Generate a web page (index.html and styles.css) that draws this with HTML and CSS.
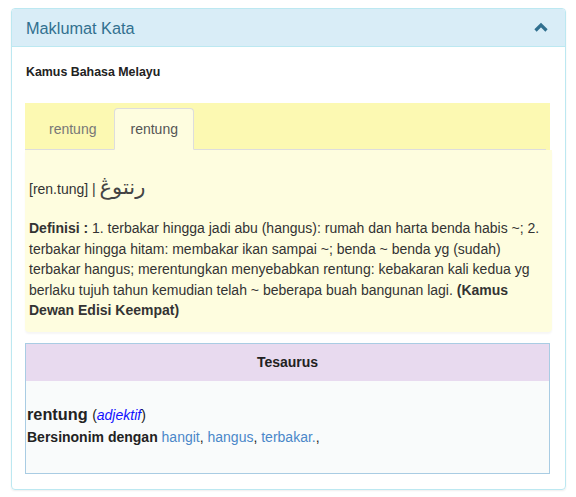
FILE: index.html
```html
<!DOCTYPE html>
<html lang="ms">
<head>
    <meta charset="UTF-8">
    <meta name="viewport" content="width=device-width, initial-scale=1.0">
    <title>Maklumat Kata</title>
    <link rel="stylesheet" href="styles.css">
</head>
<body>
    <div class="page">
        <div class="panel">
            <div class="panel-heading">
                <h3 class="panel-title">Maklumat Kata</h3>
                <svg class="chevron" width="14" height="10" viewBox="0 0 14 10">
                    <path d="M1.5 8.5 L7 3 L12.5 8.5" fill="none" stroke="#31708f" stroke-width="3.2"/>
                </svg>
            </div>

            <div class="panel-body">
                <p class="source">Kamus Bahasa Melayu</p>

                <div class="entry">
                    <ul class="nav-tabs">
                        <li><a href="#">rentung</a></li>
                        <li class="active"><a href="#">rentung</a></li>
                    </ul>
                    <div class="tab-content">
                        <p class="pron">[ren.tung] | <span class="jawi" dir="rtl">رنتوڠ</span></p>
                        <p class="definition">
                            <b>Definisi :</b> 1. terbakar hingga jadi abu (hangus): rumah dan harta benda habis ~; 2. terbakar hingga hitam: membakar ikan sampai ~; benda ~ benda yg (sudah) terbakar hangus; merentungkan menyebabkan rentung: kebakaran kali kedua yg berlaku tujuh tahun kemudian telah ~ beberapa buah bangunan lagi. <b>(Kamus Dewan Edisi Keempat)</b>
                        </p>
                    </div>
                </div>

                <div class="thesaurus">
                    <div class="thesaurus-head">Tesaurus</div>
                    <div class="thesaurus-body">
                        <p class="word"><b>rentung</b> <span class="pos">(<i>adjektif</i>)</span></p>
                        <p class="synonyms"><b>Bersinonim dengan</b> <a href="#">hangit</a>, <a href="#">hangus</a>, <a href="#">terbakar.</a>,</p>
                    </div>
                </div>
            </div>
        </div>
    </div>
</body>
</html>
```

FILE: styles.css
```css
* {
    box-sizing: border-box;
}

body {
    margin: 0;
    font-family: "Liberation Sans", Arial, Helvetica, sans-serif;
    font-size: 14px;
    line-height: 20px;
    color: #333;
    background: #fff;
}

p {
    margin: 0;
}

a {
    text-decoration: none;
}

.page {
    padding: 8px 10px 8px 11px;
}

.panel {
    border: 1px solid #bce8f1;
    border-radius: 4px;
    box-shadow: 0 1px 2px rgba(0,0,0,0.07);
}

.panel-heading {
    display: flex;
    align-items: center;
    justify-content: space-between;
    background-color: #d9edf7;
    border-bottom: 1px solid #bce8f1;
    border-radius: 3px 3px 0 0;
    padding: 9px 17px 8px 14px;
}

.panel-title {
    margin: 0;
    font-size: 16.3px;
    font-weight: normal;
    line-height: 20px;
    color: #31708f;
}

.chevron {
    display: block;
    margin-top: -2px;
}

.panel-body {
    padding: 15px 15px 15px 13px;
}

.source {
    font-size: 12.4px;
    font-weight: bold;
    color: #222;
    margin-left: 1px;
    margin-bottom: 21px;
}

/* dictionary entry */
.entry {
    margin-right: -2px;
}

.nav-tabs {
    display: flex;
    list-style: none;
    margin: 0 6px 0 0;
    padding: 5px 0 0 8px;
    background-color: #fcf9b2;
    border-bottom: 1px solid #ddd;
    box-shadow: 4px 0 0 #fcf9b2;
}

.nav-tabs li {
    margin-right: 2px;
    margin-bottom: -1px;
}

.nav-tabs a {
    display: block;
    padding: 10px 15px 10px;
    border: 1px solid transparent;
    border-radius: 4px 4px 0 0;
    color: #777;
    line-height: 20px;
}

.nav-tabs .active a {
    color: #555;
    background-color: #fefddf;
    border-color: #ddd;
    border-bottom-color: transparent;
}

.tab-content {
    background-color: #fefddf;
    padding: 24px 4px 11px 4px;
    border-radius: 0 0 4px 4px;
    box-shadow: 0 2px 2px rgba(0,0,0,0.04);
}

.pron {
    font-size: 14px;
    line-height: 26px;
    color: #333;
}

.jawi {
    font-family: "DejaVu Sans", serif;
    font-size: 21px;
    color: #444;
}

.definition {
    margin-top: 16px;
    font-size: 14px;
    line-height: 20.5px;
    color: #333;
}

/* thesaurus */
.thesaurus {
    margin-top: 11px;
    border: 1px solid #a9cce3;
}

.thesaurus-head {
    background-color: #e8daef;
    text-align: center;
    font-weight: bold;
    color: #222;
    padding: 8px;
    line-height: 20px;
    height: 37px;
}

.thesaurus-body {
    background-color: #f9fbfb;
    padding: 22px 1px 25px;
}

.word {
    font-size: 16.3px;
    line-height: 22px;
    color: #222;
}

.pos {
    font-size: 14px;
}

.pos i {
    color: #1010ff;
}

.synonyms {
    font-size: 14px;
    line-height: 22px;
    color: #222;
}

.synonyms a {
    color: #4a87c9;
}
```
